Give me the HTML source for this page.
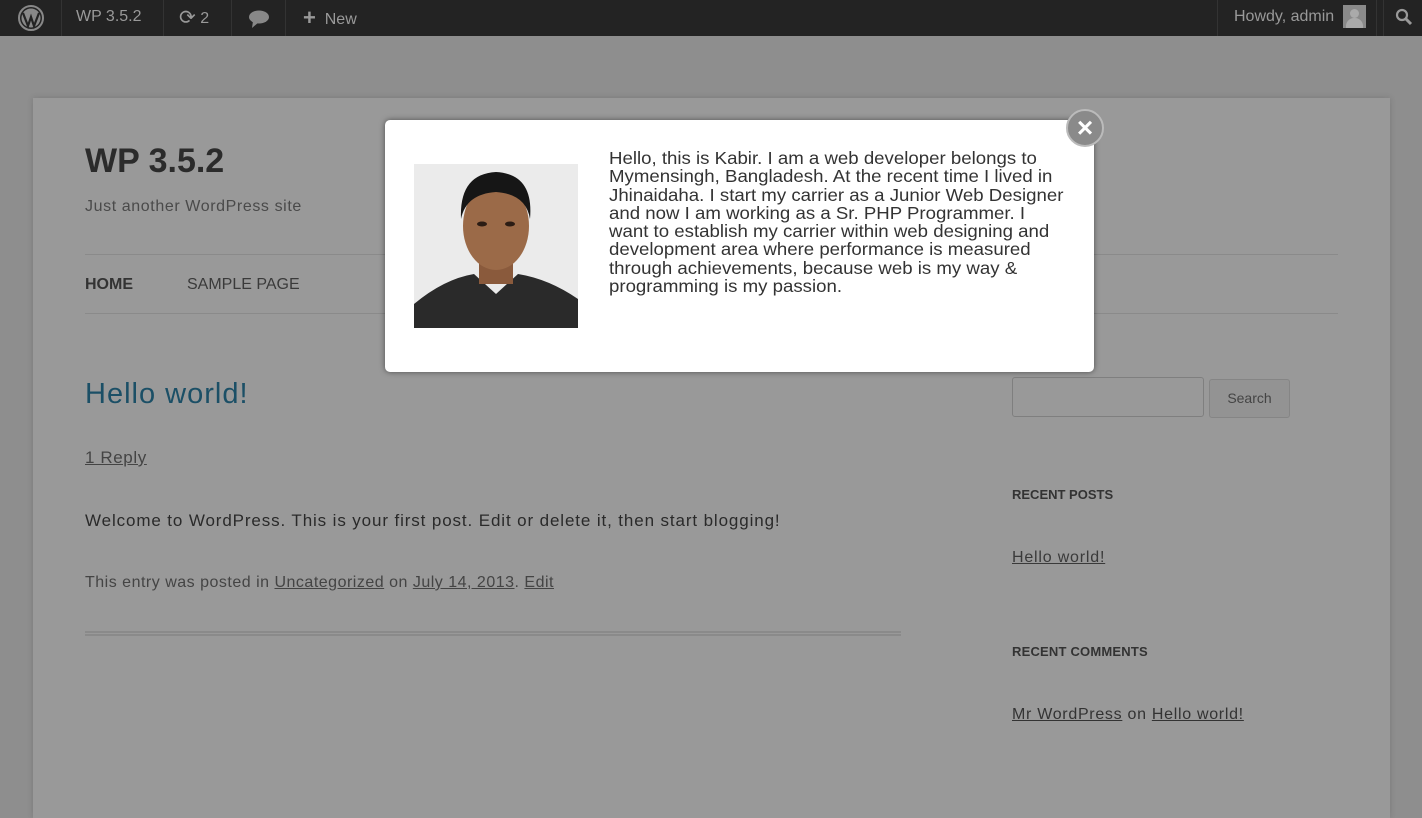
<!DOCTYPE html>
<html><head><meta charset="utf-8"><style>
*{margin:0;padding:0;box-sizing:border-box}
body{width:1422px;height:806px;overflow:hidden;background:#8e8e8e;font-family:"Liberation Sans",sans-serif;position:relative}
#bar{position:absolute;left:0;top:0;width:1422px;height:36px;background:#232323;color:#999;font-size:16px}
#bar .it{position:absolute;top:0;height:36px;line-height:34px;border-right:1px solid #333}
#box{position:absolute;left:33px;top:98px;width:1357px;height:720px;background:#999;box-shadow:0 0 6px rgba(0,0,0,.15)}
.t{position:absolute;white-space:nowrap}
a{color:inherit;text-decoration:underline}
#pop{position:absolute;left:385px;top:120px;width:709px;height:252px;background:#fff;border-radius:5px;box-shadow:0 0 6px rgba(0,0,0,.5)}
#txt{position:absolute;left:224px;top:29px;font-size:17.5px;line-height:18.3px;color:#333;white-space:nowrap;transform:scaleX(1.065);transform-origin:0 0}
</style></head><body>
<div id="bar">
 <div class="it" style="left:0;width:62px"><svg width="28" height="28" viewBox="0 0 28 28" style="position:absolute;left:17px;top:4px"><circle cx="14" cy="14" r="12" fill="none" stroke="#888" stroke-width="2"/><circle cx="14" cy="14" r="9.5" fill="#888"/><path d="M6 9 L11 22 L14 13 L17 22 L22 9" stroke="#232323" stroke-width="2.2" fill="none"/></svg></div>
 <div class="it" style="left:62px;width:102px;padding-left:14px">WP 3.5.2</div>
 <div class="it" style="left:164px;width:68px;padding-left:15px"><span style="font-size:20px;position:relative;top:1px">⟳</span> 2</div>
 <div class="it" style="left:232px;width:54px"><svg width="22" height="20" style="position:absolute;left:16px;top:9px"><ellipse cx="11" cy="8" rx="10" ry="6.5" fill="#888"/><path d="M5 12 L4 19 L11 13Z" fill="#888"/></svg></div>
 <div class="it" style="left:286px;width:90px;padding-left:17px;border:none"><b style="font-size:22px;position:relative;top:1px">+</b> &nbsp;New</div>
 <div class="it" style="left:1217px;width:160px;border-left:1px solid #333;padding-left:16px">Howdy, admin</div>
 <div style="position:absolute;left:1343px;top:5px;width:23px;height:23px;background:#8a8a8a"><div style="position:absolute;left:7px;top:4px;width:9px;height:9px;border-radius:50%;background:#aaa"></div><div style="position:absolute;left:3px;top:13px;width:17px;height:10px;border-radius:8px 8px 0 0;background:#aaa"></div></div>
 <div style="position:absolute;left:1383px;top:0;height:36px;border-left:1px solid #333"></div>
 <svg width="18" height="18" style="position:absolute;left:1395px;top:8px"><circle cx="7" cy="7" r="5" stroke="#999" stroke-width="2.2" fill="none"/><path d="M11 11 L16 16" stroke="#999" stroke-width="3"/></svg>
</div>
<div id="box">
 <div class="t" style="left:52px;top:44px;font-size:34px;font-weight:bold;color:#2b2b2b">WP 3.5.2</div>
 <div class="t" style="left:52px;top:100px;font-size:16px;color:#4a4a4a;letter-spacing:.6px">Just another WordPress site</div>
 <div style="position:absolute;left:52px;top:156px;width:1253px;border-top:1px solid #8a8a8a"></div>
 <div class="t" style="left:52px;top:178px;font-size:16px;font-weight:bold;color:#333">HOME</div>
 <div class="t" style="left:154px;top:178px;font-size:16px;color:#3a3a3a">SAMPLE PAGE</div>
 <div style="position:absolute;left:52px;top:215px;width:1253px;border-top:1px solid #8a8a8a"></div>
 <div class="t" style="left:52px;top:280px;font-size:29px;color:#1b4f66;letter-spacing:1px">Hello world!</div>
 <div class="t" style="left:52px;top:350px;font-size:17px;color:#444;letter-spacing:.6px"><a>1 Reply</a></div>
 <div class="t" style="left:52px;top:413px;font-size:17px;color:#2a2a2a;letter-spacing:.88px">Welcome to WordPress. This is your first post. Edit or delete it, then start blogging!</div>
 <div class="t" style="left:52px;top:476px;font-size:16px;color:#444;letter-spacing:.5px">This entry was posted in <a>Uncategorized</a> on <a>July 14, 2013</a>. <a>Edit</a></div>
 <div style="position:absolute;left:52px;top:533px;width:816px;height:5px;border-top:2px solid #8a8a8a;border-bottom:2px solid #8a8a8a"></div>
 <div style="position:absolute;left:979px;top:279px;width:192px;height:40px;border:1px solid #7f7f7f;border-radius:3px"></div>
 <div style="position:absolute;left:1176px;top:281px;width:81px;height:39px;border:1px solid #858585;border-radius:3px;background:#939393;font-size:14px;color:#444;text-align:center;line-height:37px">Search</div>
 <div class="t" style="left:979px;top:389px;font-size:13px;font-weight:bold;color:#333">RECENT POSTS</div>
 <div class="t" style="left:979px;top:451px;font-size:16px;color:#3a3a3a;letter-spacing:.8px"><a>Hello world!</a></div>
 <div class="t" style="left:979px;top:546px;font-size:13px;font-weight:bold;color:#333;letter-spacing:.2px">RECENT COMMENTS</div>
 <div class="t" style="left:979px;top:608px;font-size:16px;color:#333;letter-spacing:.7px"><a>Mr WordPress</a> on <a>Hello world!</a></div>
</div>
<div id="pop">
 <svg width="164" height="164" style="position:absolute;left:29px;top:44px"><rect width="164" height="164" fill="#ebebeb"/><path d="M0 140 Q30 115 60 110 L82 130 L104 110 Q135 115 164 135 L164 164 L0 164Z" fill="#2a2a2a"/><rect x="65" y="85" width="34" height="35" fill="#8a5a3c"/><ellipse cx="82" cy="62" rx="33" ry="44" fill="#9b6a48"/><path d="M47 55 Q45 10 82 8 Q120 10 116 55 Q112 30 82 28 Q52 30 47 55Z" fill="#161616"/><ellipse cx="68" cy="60" rx="5" ry="2.5" fill="#2b1c14"/><ellipse cx="96" cy="60" rx="5" ry="2.5" fill="#2b1c14"/></svg>
 <div id="txt">Hello, this is Kabir. I am a web developer belongs to<br>Mymensingh, Bangladesh. At the recent time I lived in<br>Jhinaidaha. I start my carrier as a Junior Web Designer<br>and now I am working as a Sr. PHP Programmer. I<br>want to establish my carrier within web designing and<br>development area where performance is measured<br>through achievements, because web is my way &amp;<br>programming is my passion.</div>
</div>
<div style="position:absolute;left:1066px;top:109px;width:38px;height:38px;border-radius:50%;background:#8a8a8a;border:2px solid #bbb;color:#fff;font-size:28px;font-weight:bold;text-align:center;line-height:33px">×</div>
</body></html>
